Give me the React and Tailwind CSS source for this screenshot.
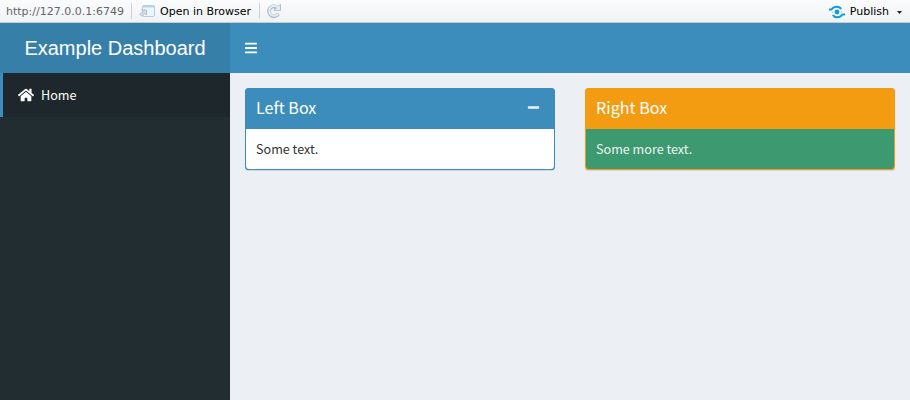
import React from "react";
import { FaBars, FaHome, FaMinus } from "react-icons/fa";

function PopOutIcon() {
  return (
    <svg width="16" height="14" viewBox="0 0 16 14" fill="none">
      <rect x="3.5" y="1.500" width="12" height="11" rx="1.5" fill="#edf6fc" stroke="#b4cbdd" />
      <path d="M4 2.500h11" stroke="#b9d3e8" strokeWidth="2" />
      <path d="M2.500 6h5v5L5.900 9.300l-3 3-2-2 3-3z" fill="#d3dce4" stroke="#aab6c2" strokeWidth="0.8" />
    </svg>
  );
}

function ReloadIcon() {
  return (
    <svg width="16" height="16" viewBox="0 0 16 16" fill="none">
      <path d="M11.200 4.300A5 5 0 1 0 12.300 10.800" stroke="#b3c1d0" strokeWidth="4" />
      <path d="M14.500 1v6.500H8V5.600h2.500L9.500 4.400h1.700z" fill="#e3ebf5" stroke="#b3c1d0" strokeLinejoin="round" />
      <path d="M12.300 4.800A5 5 0 1 0 12 11" stroke="#e3ebf5" strokeWidth="2" />
    </svg>
  );
}

function PublishIcon() {
  return (
    <svg width="16" height="14" viewBox="0 0 16 14" fill="none" stroke="#149bdf" strokeWidth="2">
      <circle cx="8" cy="7" r="2.4" fill="#149bdf" stroke="none" />
      <path d="M0 4.500h2.500C4 2.500 5.800 1.700 7.800 1.700c1.900 0 3.500.8 4.400 2.300" />
      <path d="M16 9.500h-2.500c-1.500 2-3.300 2.800-5.300 2.800-1.900 0-3.500-.8-4.400-2.300" />
      <path d="M3.800 6v2.500M12.200 5.500V8" strokeWidth="1" opacity="0.3" />
    </svg>
  );
}

function Box({ title, frame, body, collapsible, children }) {
  return (
    <section className={`h-[82px] w-[310px] overflow-hidden rounded-[3px] border shadow-[0_1px_1px_rgba(0,0,0,0.1)] ${frame}`}>
      <header className="flex h-10 items-center justify-between pr-[14px] pb-[3px] pl-[10px] text-white">
        <h3 className="pb-[2px] text-[16.1px] leading-[18px]">{title}</h3>
        {collapsible && <FaMinus className="size-[13px] text-[#e8f4fb]" />}
      </header>
      <div className={`flex h-10 items-center rounded-b-[3px] px-[10px] text-[12.6px] leading-5 ${body}`}>{children}</div>
    </section>
  );
}

export default function App() {
  return (
    <div className="flex h-[400px] w-[910px] flex-col overflow-hidden bg-[#ecf0f5] font-['Noto_Sans_CJK_SC',sans-serif]">
      <div className="flex h-[23px] shrink-0 items-center border-b border-[#c5cdd3] bg-linear-to-b from-[#fbfcfd] to-[#f0f2f4] font-['DejaVu_Sans',sans-serif] text-[11px] leading-4 text-black">
        <span className="w-[125px] pt-[2px] pl-[6px] text-[#666]">http://127.0.0.1:6749</span>
        <span className="ml-[6px] h-4 w-px bg-[#cfd2d4]" />
        <span className="ml-[7px]"><PopOutIcon /></span>
        <span className="ml-[5px] w-[99px] pt-[2px]">Open in Browser</span>
        <span className="h-4 w-px bg-[#cfd2d4]" />
        <span className="ml-[6px]"><ReloadIcon /></span>
        <span className="mr-[5px] ml-auto pt-[2px]"><PublishIcon /></span>
        <span className="pt-[2px]">Publish</span>
        <svg className="mt-[3px] mr-[8px] ml-[8px]" width="5" height="3" viewBox="0 0 5 3"><path d="M0 0h5L2.500 3z" fill="#222" /></svg>
      </div>
      <header className="flex h-[50px] shrink-0 bg-[#3c8dbc] text-white">
        <div className="flex w-[230px] items-center justify-center bg-[#367fa9] font-['Liberation_Sans',sans-serif] text-[20px]">Example Dashboard</div>
        <button className="flex items-center px-[15px]"><FaBars className="h-[14px] w-3" preserveAspectRatio="none" /></button>
      </header>
      <div className="flex min-h-0 grow">
        <aside className="w-[230px] bg-[#222d32]">
          <a className="flex h-11 items-center border-l-[3px] border-[#3c8dbc] bg-[#1e282c] pl-[15px] text-[12.6px] text-white">
            <FaHome className="size-4" />
            <span className="ml-[7px]">Home</span>
          </a>
        </aside>
        <main className="flex grow items-start justify-between p-[15px]">
          <Box title="Left Box" frame="border-[#3c8dbc] bg-[#3c8dbc]" body="bg-white text-[#333]" collapsible>Some text.</Box>
          <Box title="Right Box" frame="border-[#f39c12] bg-[#f39c12]" body="bg-[#3d9970] text-[#edf6f2]">Some more text.</Box>
        </main>
      </div>
    </div>
  );
}
